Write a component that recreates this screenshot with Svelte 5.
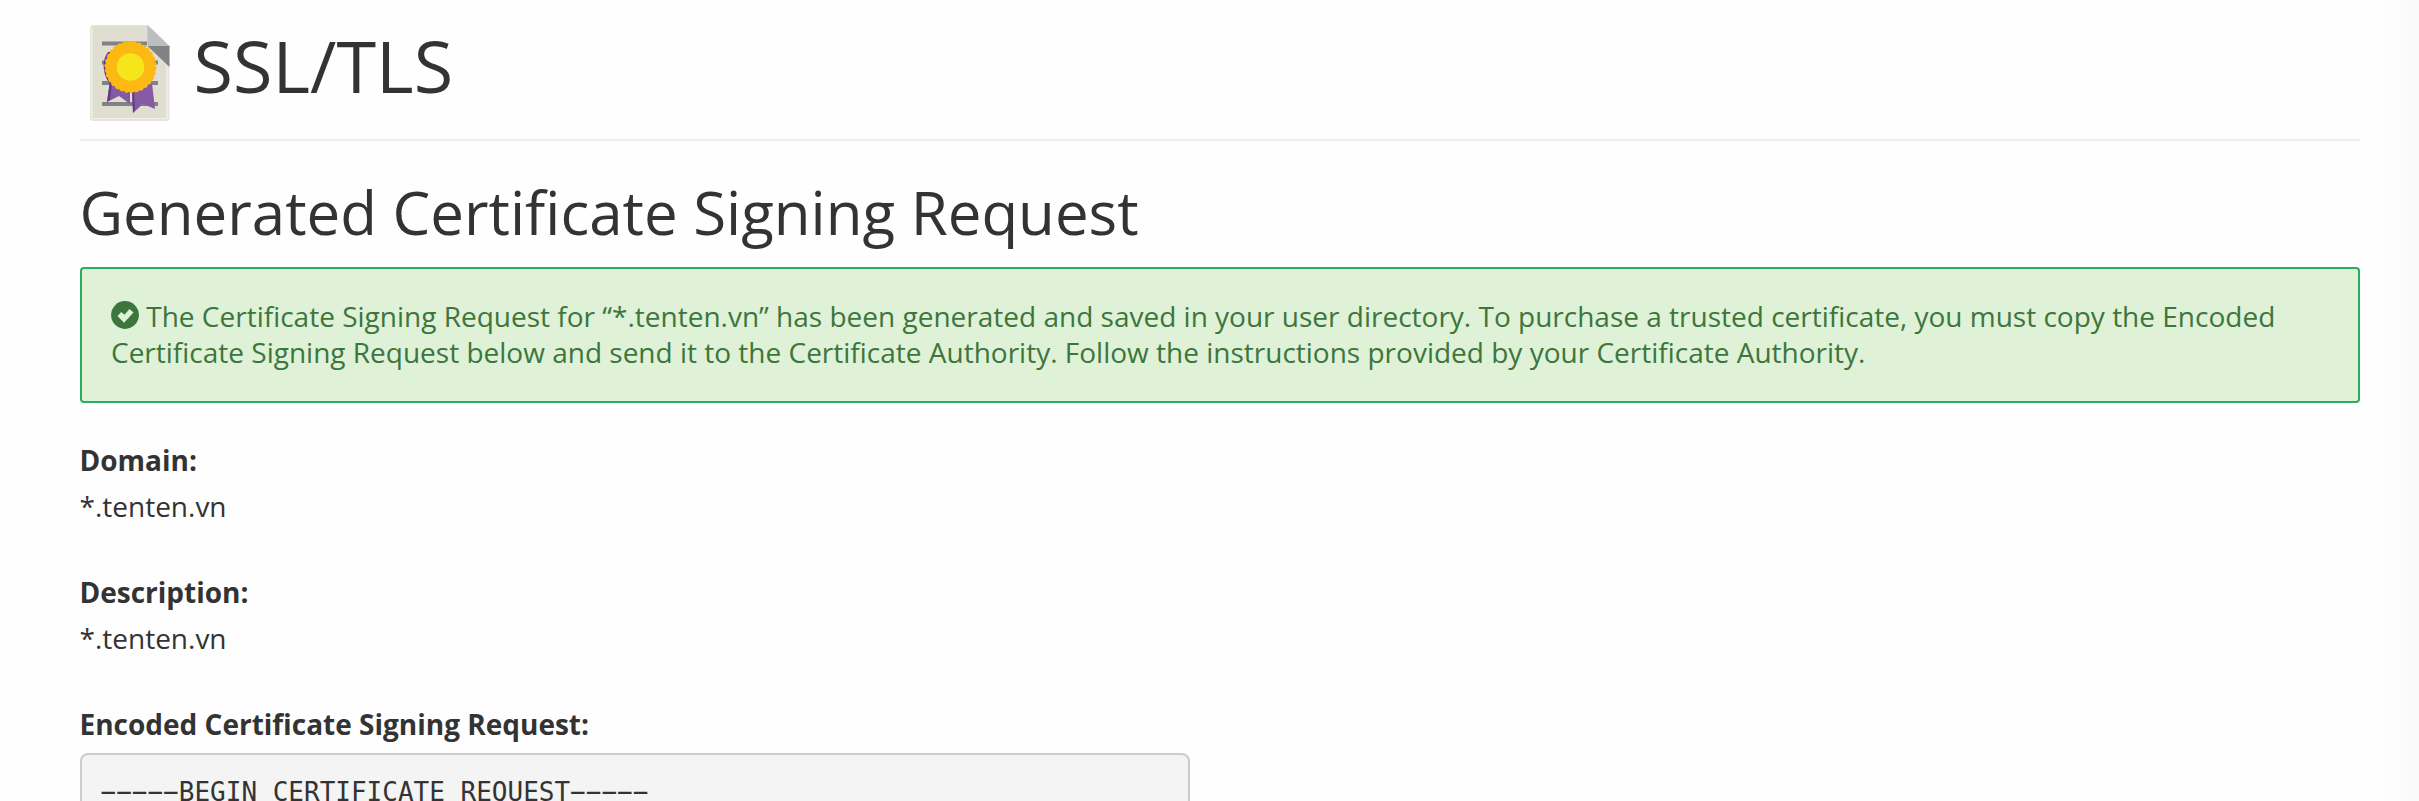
<script>
    export let domain = "*.tenten.vn";
    export let description = "*.tenten.vn";
    export let csr = "−−−−−BEGIN CERTIFICATE REQUEST−−−−−";

    $: fields = [
        { label: "Domain:", value: domain },
        { label: "Description:", value: description },
    ]
</script>

<div class="page">
    <h1>
        <svg class="cert" viewBox="0 0 80 96" width="80" height="96" aria-hidden="true">
            <path fill="#e6e4d9" d="M3 0H57.500L79.500 21V93a3 3 0 0 1-3 3H3a3 3 0 0 1-3-3V3a3 3 0 0 1 3-3z"/>
            <path fill="none" stroke="#f2f1e8" d="M1.800 3V93.500H77V42"/>
            <path fill="#e0ded1" d="M3 1H57.500L76 21V93H3z"/>
            <path fill="#808285" d="M12 16.500h45v4H12zM12 35.500h56v4H12zM12 56h56v4H12zM12 77h56v4H12z"/>
            <path fill="#808285" d="M57.500 21H79.500V42z"/>
            <path fill="#bcbec0" d="M57.500 0L79.500 21H57.500z"/>
            <path fill="#653b87" d="M18 27C12 34 12 48 19 58l6 8 15-3V25z"/>
            <path fill="#855aa5" d="M20 55l-3 22 12-6 11 8V60z"/>
            <path fill="#855aa5" d="M42 63l1 25 10-9 12 5-3-26-9 1z"/>
            <path fill="#653b87" d="M20 56l-3 21 3-2 2-16zM42 66l1 22 2-3-1-18z"/>
            <circle cx="40.500" cy="42" r="25.200" fill="#fdb913"/>
            <circle cx="40.500" cy="42" r="25" fill="none" stroke="#fdb913" stroke-width="2" stroke-dasharray="3 2.200"/>
            <circle cx="40.500" cy="42" r="13.800" fill="#f5e51b"/>
        </svg>
        <span>SSL/TLS</span>
    </h1>

    <h2>Generated Certificate Signing Request</h2>

    <div class="alert">
        <svg class="ok" viewBox="0 0 28 28" width="28" height="28" aria-hidden="true">
            <circle cx="14" cy="14" r="13.900" fill="#3c763d"/>
            <path fill="#dff1d6" d="M6.500 15l3.800-4 3.200 2.800L18.500 8l4 3.500L13 21.800z"/>
        </svg>
        The Certificate Signing Request for “{domain}” has been generated and saved in your user directory. To purchase a trusted certificate, you must copy the Encoded Certificate Signing Request below and send it to the Certificate Authority. Follow the instructions provided by your Certificate Authority.
    </div>

    {#each fields as field}
        <div class="field">
            <strong>{field.label}</strong>
            <p>{field.value}</p>
        </div>
    {/each}

    <strong>Encoded Certificate Signing Request:</strong>
    <pre>{csr}</pre>
</div>

<style>
    :global(body) {
        overflow: hidden;
    }

    .page {
        box-sizing: border-box;
        height: 801px;
        overflow: hidden;
        padding: 0 59px 0 79.5px;
        background: linear-gradient(to left, #f9f9f9, #fefefe 40px);
        color: #333;
        font: 28px/36px "Open Sans", sans-serif;
    }

    h1 {
        box-sizing: border-box;
        display: flex;
        height: 141px;
        margin: 0;
        border-bottom: 2px solid #eee;
        font-size: 72px;
        font-weight: 400;
        line-height: 80px;
    }

    h1 .cert {
        margin: 25px 23.5px 0 10.5px;
    }

    h1 span {
        margin-top: 25px;
    }

    h2 {
        margin: 38px 0 22px;
        font-size: 60px;
        font-weight: 400;
        line-height: 66px;
    }

    .alert {
        box-sizing: border-box;
        height: 136px;
        padding: 29px 60px 29px 29.5px;
        border: 2px solid #27ae60;
        border-radius: 4px;
        background: #dff1d6;
        color: #3c763d;
        margin-bottom: 39px;
    }

    .alert .ok {
        vertical-align: -2px;
    }

    .field {
        height: 132px;
    }

    strong {
        display: block;
        font-weight: 700;
    }

    p {
        margin: 10px 0 0;
    }

    pre {
        box-sizing: border-box;
        width: 1110px;
        height: 500px;
        margin: 11px 0 0;
        padding: 19px;
        border: 2px solid #ccc;
        border-radius: 8px;
        background: #f4f4f4;
        font: 26px/36px "DejaVu Sans Mono", monospace;
    }
</style>
